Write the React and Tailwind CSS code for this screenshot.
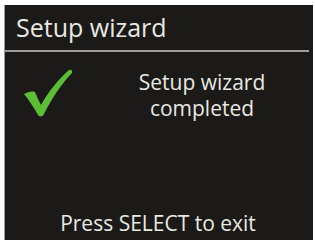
import React from "react";

function Check() {
  return (
    <svg width="52" height="50" viewBox="0 0 52 50">
      <path
        d="M2 26 C6 24 10 23 13 24 C15 29 17 33 19 37 C26 24 36 12 47 2 C49 1 51 3 50 5 C40 15 30 30 22 46 C21 49 17 49 16 47 C12 40 7 32 2 26 Z"
        fill="#5cbd36"
      />
    </svg>
  );
}

export default function App() {
  return (
    <div className="w-[315px] h-[240px] bg-white pt-[5px] pl-[4px] pr-[2px] overflow-hidden">
      <div
        className="h-full bg-[#1b1a18] border-l border-[#9a9a9a] flex flex-col text-[#e9e9e2]"
        style={{ fontFamily: "'Open Sans', 'Liberation Sans', sans-serif" }}
      >
        <div className="h-[45px] flex items-center pl-[11px] text-[25px] leading-none pb-[1px]">
          Setup wizard
        </div>
        <div className="h-[2px] bg-[#9c9c98] mr-[4px]" />
        <div className="flex pt-[13px]">
          <div className="w-[80px] pl-[17px] pt-[3px]">
            <Check />
          </div>
          <div className="flex-1 text-center text-[21px] leading-[26px] pt-[4px] pl-[6px]">
            <div>Setup wizard</div>
            <div>completed</div>
          </div>
        </div>
        <div className="mt-auto pb-[3px] text-center text-[21px] leading-[28px] pr-[2px]">
          Press SELECT to exit
        </div>
      </div>
    </div>
  );
}
